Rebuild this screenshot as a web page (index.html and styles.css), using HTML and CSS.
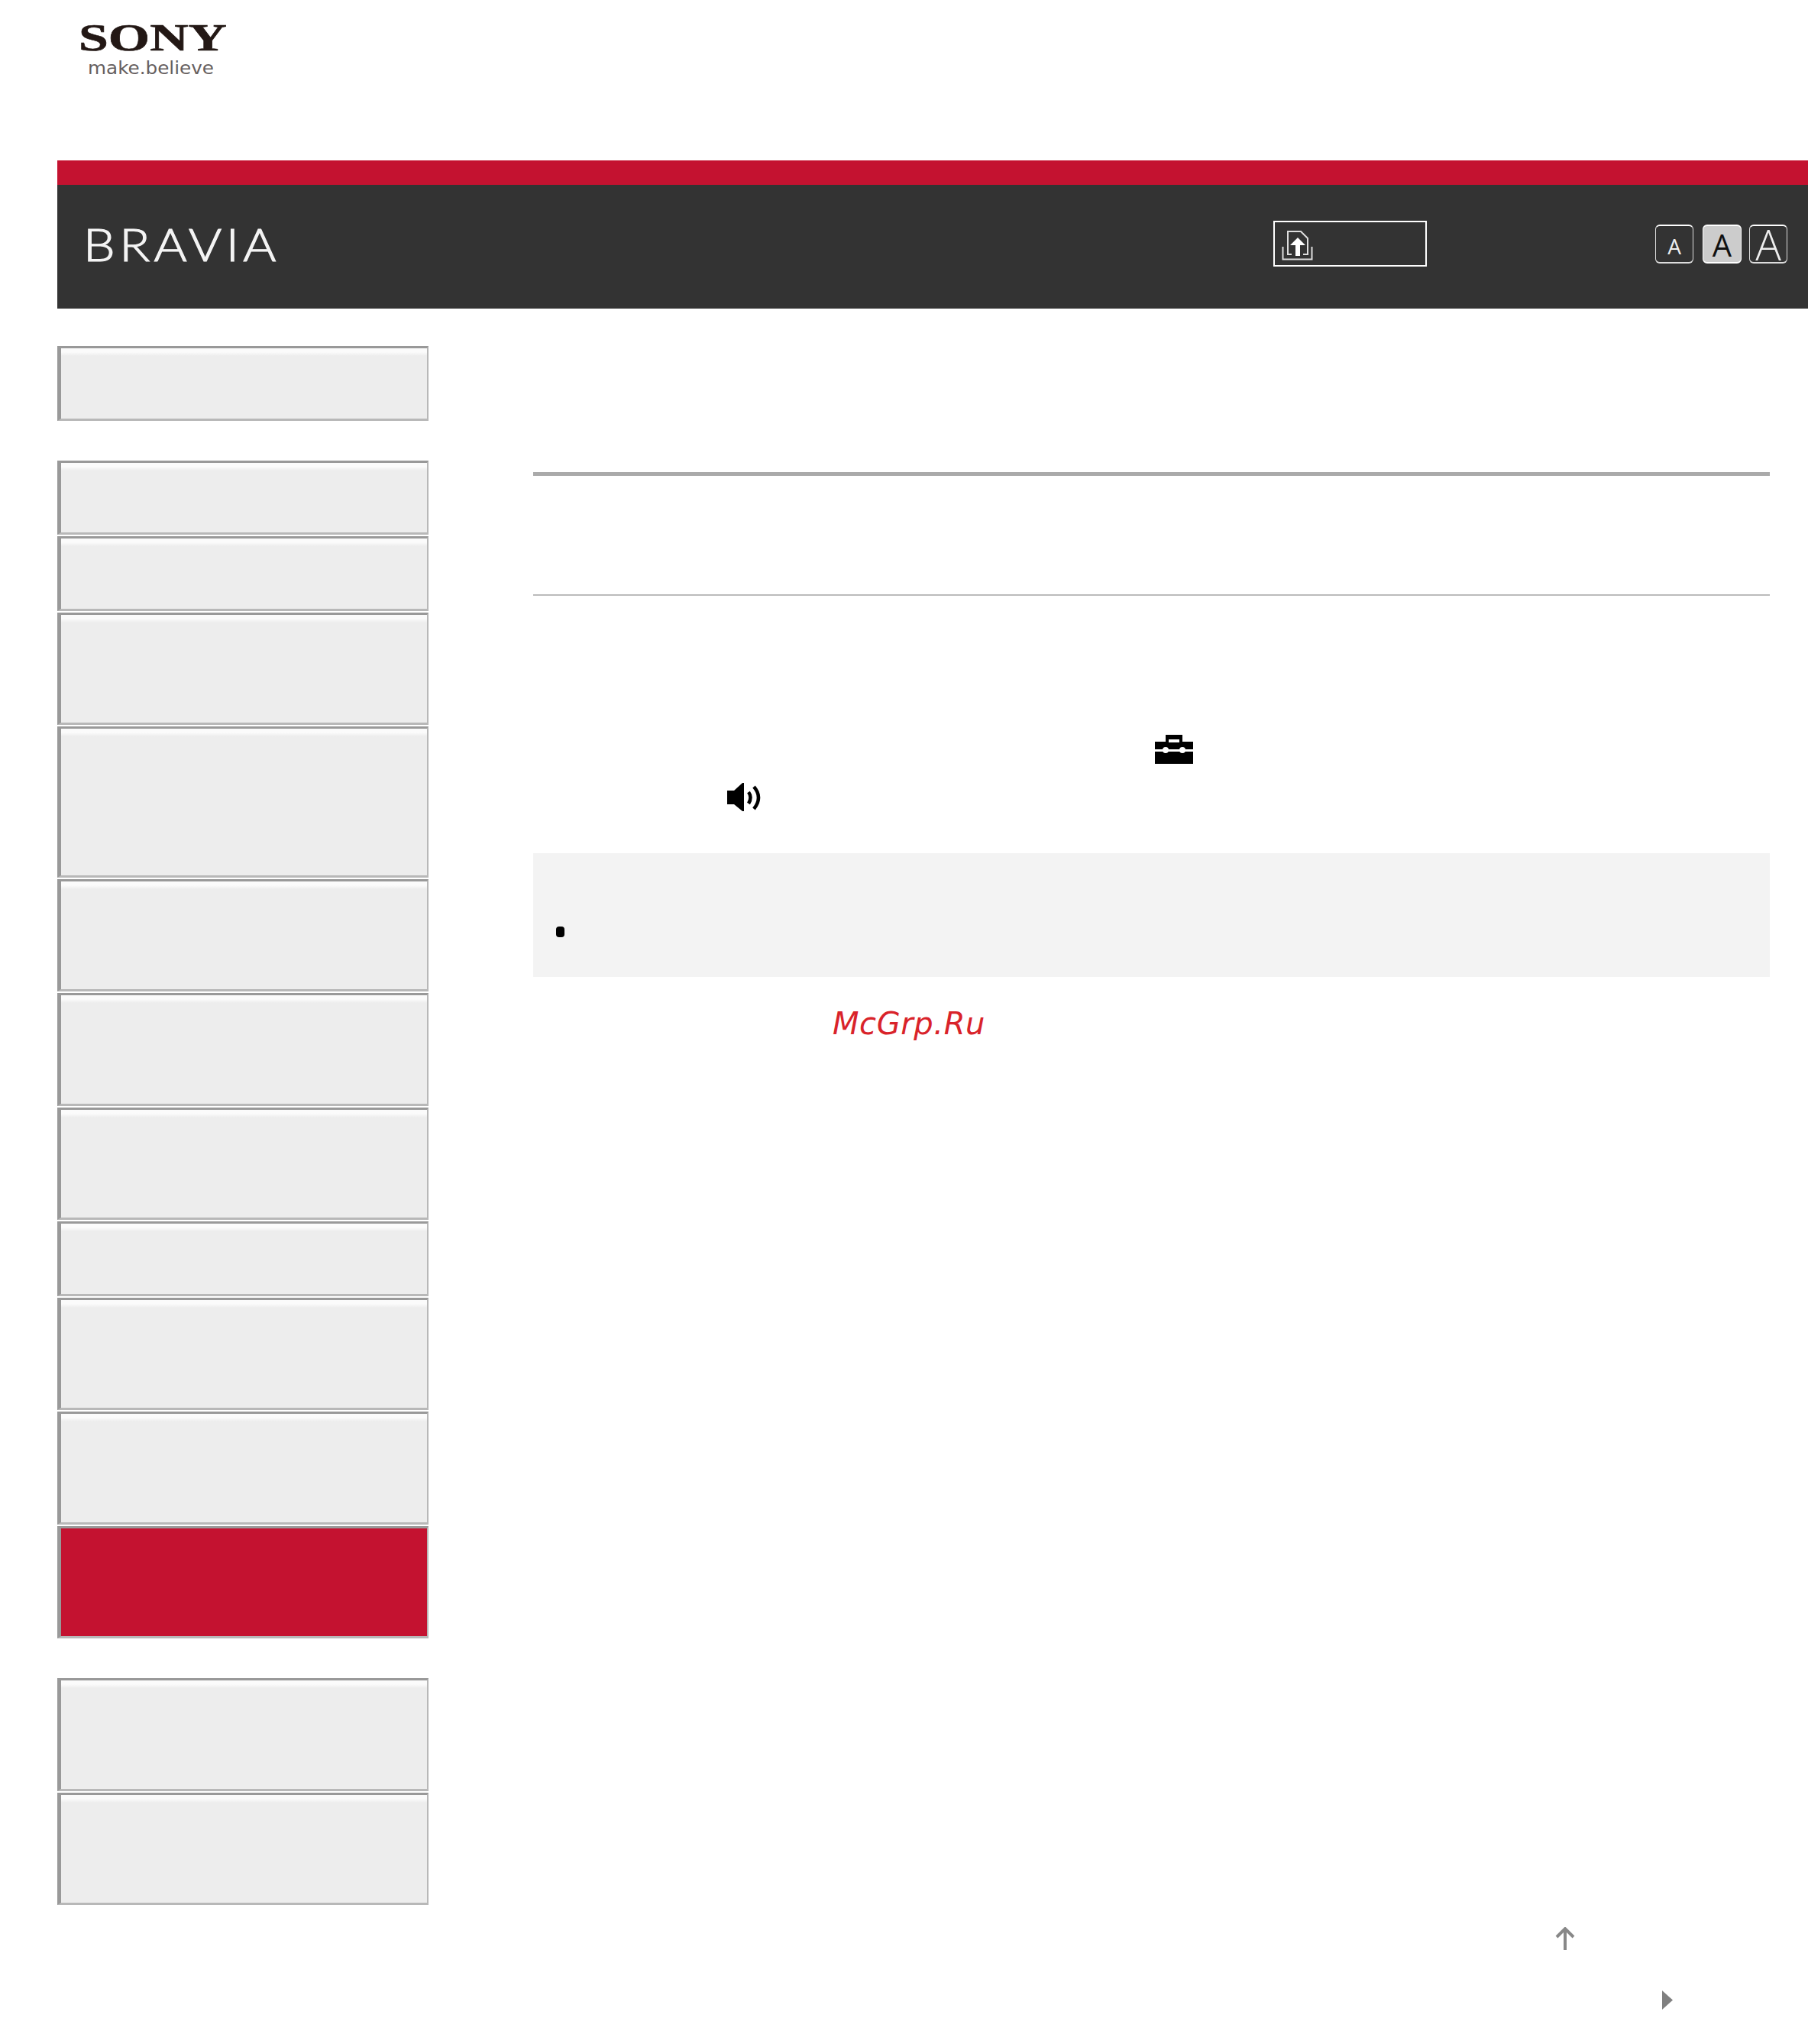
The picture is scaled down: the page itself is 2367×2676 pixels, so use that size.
FILE: index.html
```html
<!DOCTYPE html>
<html lang="en">
<head>
<meta charset="utf-8">
<title>BRAVIA Help Guide</title>
<link rel="stylesheet" href="styles.css">
</head>
<body>
<div class="page">
  <header class="logo">
    <svg class="logo-svg" width="230" height="80" viewBox="0 0 230 80" aria-label="SONY make.believe">
      <text class="logo-sony" x="1" y="33" textLength="194" lengthAdjust="spacingAndGlyphs">SONY</text>
      <text class="logo-tag" x="13" y="64" textLength="165" lengthAdjust="spacingAndGlyphs">make.believe</text>
    </svg>
  </header>
  <div class="redbar"></div>
  <div class="darkbar">
    <svg class="brand" width="270" height="70" viewBox="0 0 270 70" aria-label="BRAVIA">
      <text class="brand-text" x="1" y="54" textLength="258" lengthAdjust="spacingAndGlyphs">BRAVIA</text>
    </svg>
    <div class="export">
      <svg class="export-icon" width="41" height="39" viewBox="0 0 41 39">
        <path class="ico-line" d="M13 31H8V1H25L34 10V31H28"/>
        <path class="ico-line" d="M1.500 21V37.500H39.500V21"/>
        <path class="ico-fill" d="M21 9L31 19H24V33H18V19H11Z"/>
      </svg>
    </div>
    <div class="sizes">
      <div class="size size-s">A</div>
      <div class="size size-m">A</div>
      <div class="size size-l">A</div>
    </div>
  </div>
  <div class="layout">
    <nav class="side">
      <div class="group">
        <div class="item h1"></div>
      </div>
      <div class="group">
        <div class="item h1"></div>
        <div class="item h1"></div>
        <div class="item h2"></div>
        <div class="item h3"></div>
        <div class="item h2"></div>
        <div class="item h2"></div>
        <div class="item h2"></div>
        <div class="item h1"></div>
        <div class="item h2"></div>
        <div class="item h2"></div>
        <div class="item h2 active"></div>
      </div>
      <div class="group">
        <div class="item h2"></div>
        <div class="item h2"></div>
      </div>
    </nav>
    <main class="content">
      <div class="rule-thick"></div>
      <div class="rule-thin"></div>
      <div class="step step-tool">
        <svg width="50" height="38" viewBox="0 0 50 38">
          <path fill-rule="evenodd" d="M14 0H36V9H50V19H0V9H14ZM18 6V10H32V6Z"/>
          <rect x="0" y="22" width="50" height="16"/>
          <circle class="ico-gap" cx="14" cy="20" r="4"/>
          <circle class="ico-gap" cx="36" cy="20" r="4"/>
        </svg>
      </div>
      <div class="step step-sound">
        <svg width="44" height="37" viewBox="0 0 44 37">
          <path d="M0 10H9L20 0H22V37H20L9 28H0Z"/>
          <path class="ico-arc" d="M28 12Q33 19 28 27"/>
          <path class="ico-arc" d="M35 5Q47 19 35 34"/>
        </svg>
      </div>
      <div class="note"><span class="bullet"></span></div>
      <div class="watermark">McGrp.Ru</div>
      <div class="foot">
        <svg class="foot-up" width="26" height="31" viewBox="0 0 26 31">
          <path d="M13 30V3M2 13L13 2L24 13"/>
        </svg>
        <svg class="foot-next" width="14" height="25" viewBox="0 0 14 25">
          <path d="M0 0L14 12.500L0 25Z"/>
        </svg>
      </div>
    </main>
  </div>
</div>
</body>
</html>
```
FILE: styles.css
```css
html, body {
  margin: 0;
  padding: 0;
  background: #fff;
}
.page {
  width: 2367px;
  height: 2676px;
  padding-left: 75px;
  box-sizing: border-box;
  overflow: hidden;
  font-family: "Liberation Sans", sans-serif;
}
.logo {
  height: 210px;
  padding: 33px 0 0 27px;
  box-sizing: border-box;
}
.logo-svg {
  display: block;
  overflow: visible;
}
.logo-sony {
  font-family: "Liberation Serif", serif;
  font-weight: 700;
  font-size: 50px;
  fill: #231815;
  stroke: #231815;
  stroke-width: 0.6px;
}
.logo-tag {
  font-family: "DejaVu Sans", sans-serif;
  font-size: 23px;
  fill: #666060;
}
.redbar {
  height: 32px;
  background: #c41230;
}
.darkbar {
  height: 162px;
  padding: 0 27px 8px 33px;
  box-sizing: border-box;
  background: #333;
  display: flex;
  align-items: center;
}
.brand {
  display: block;
  margin-top: 8px;
  overflow: visible;
}
.brand-text {
  font-family: Lato, sans-serif;
  font-weight: 300;
  font-size: 60px;
  letter-spacing: 5px;
  fill: #f4f4f4;
  stroke: #f4f4f4;
  stroke-width: 1.2px;
}
.export {
  margin-left: auto;
  width: 201px;
  height: 60px;
  border: 2.500px solid #fff;
  box-sizing: border-box;
  padding: 11px 0 0 9px;
}
.export-icon {
  display: block;
}
.ico-line {
  fill: none;
  stroke: #ddd;
  stroke-width: 2px;
}
.ico-fill {
  fill: #fff;
}
.sizes {
  margin-left: 299px;
  display: flex;
  gap: 10px;
}
.size {
  width: 50px;
  height: 51px;
  box-sizing: border-box;
  border: 1px solid #ddd;
  border-top: 2px solid #fff;
  border-bottom-width: 2px;
  border-radius: 6px;
  display: flex;
  align-items: center;
  justify-content: center;
  font-family: "Open Sans", sans-serif;
  color: #eee;
}
.size-s {
  font-size: 28px;
  padding-top: 5px;
}
.size-m {
  font-size: 40px;
  width: 51px;
  margin-left: 2px;
  padding-top: 2px;
  background: #ccc;
  color: #111;
  border-color: #fff;
}
.size-l {
  font-size: 56px;
  font-weight: 300;
}
.layout {
  display: grid;
  grid-template-columns: 486px 1fr;
  margin-top: 49px;
}
.side {
  display: flex;
  flex-direction: column;
  gap: 52px;
}
.group {
  display: flex;
  flex-direction: column;
  gap: 2px;
}
.item {
  box-sizing: border-box;
  border-style: solid;
  border-width: 3px 2px 3px 5px;
  border-color: #999 #b8b8b8 #b8b8b8 #999;
  background: linear-gradient(#fbfbfb 5px, #ededed 10px);
}
.h1 {
  height: 97.500px;
}
.h2 {
  height: 147.500px;
}
.h3 {
  height: 197.500px;
}
.active {
  background: #c41230;
}
.content {
  padding: 165px 50px 0 137px;
  display: flex;
  flex-direction: column;
}
.rule-thick {
  height: 5px;
  background: #aaa;
}
.rule-thin {
  height: 2px;
  margin-top: 155px;
  background: #bbb;
}
.step svg {
  display: block;
  fill: #000;
}
.step-tool {
  margin-top: 182px;
  padding-left: 814px;
}
.step-sound {
  margin-top: 25px;
  padding-left: 254px;
}
.ico-gap {
  fill: #fff;
}
.ico-arc {
  fill: none;
  stroke: #000;
  stroke-width: 4.500px;
}
.note {
  height: 162px;
  margin-top: 55px;
  padding: 96px 0 0 30px;
  box-sizing: border-box;
  background: #f3f3f3;
}
.bullet {
  display: block;
  width: 11px;
  height: 14px;
  border-radius: 4px;
  background: #000;
}
.watermark {
  margin: 38px 0 0 392px;
  font-family: "DejaVu Sans", sans-serif;
  font-style: italic;
  font-size: 40px;
  line-height: 46px;
  letter-spacing: 0.6px;
  color: #d9232a;
}
.foot {
  position: relative;
  flex: 1;
}
.foot-up {
  position: absolute;
  left: 1338px;
  top: 1160px;
  fill: none;
  stroke: #888;
  stroke-width: 4px;
}
.foot-next {
  position: absolute;
  left: 1478px;
  top: 1243px;
  fill: #808080;
}
```
